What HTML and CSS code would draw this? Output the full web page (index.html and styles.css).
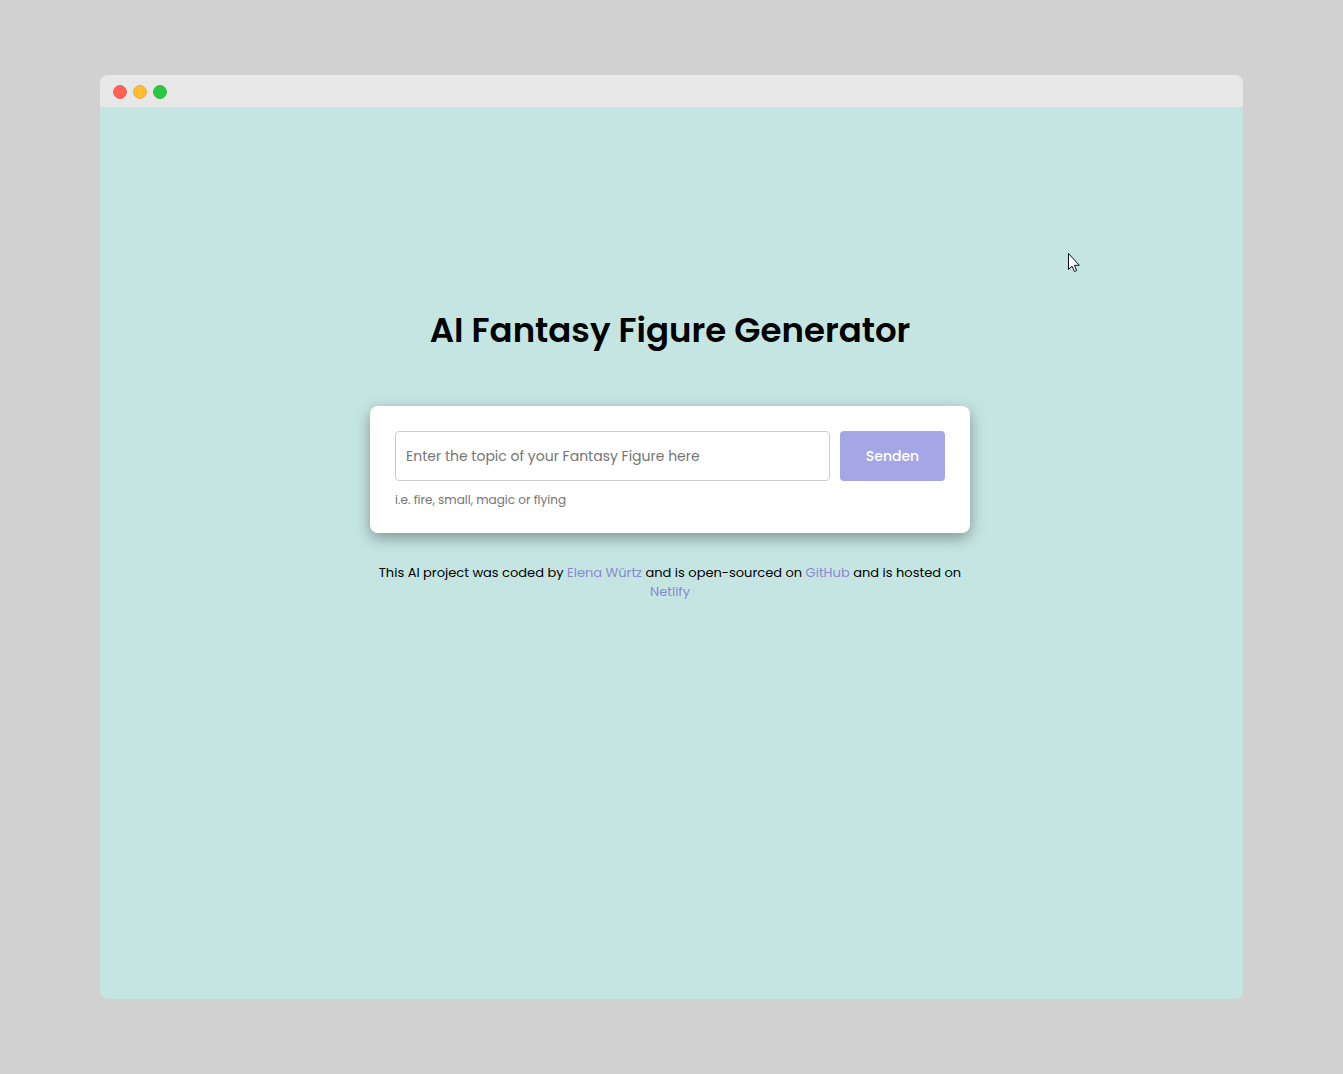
FILE: index.html
```html
<!DOCTYPE html>
<html lang="en">
<head>
<meta charset="utf-8">
<title>AI Fantasy Figure Generator</title>
<link rel="stylesheet" href="styles.css">
</head>
<body>
<div class="window">
  <div class="titlebar">
    <span class="dot dot-close"></span>
    <span class="dot dot-minimize"></span>
    <span class="dot dot-zoom"></span>
  </div>
  <main class="page">
    <h1 class="title">AI Fantasy Figure Generator</h1>
    <form class="card">
      <div class="row">
        <input class="topic" id="topic" type="text" aria-label="Topic" aria-describedby="hint" placeholder="Enter the topic of your Fantasy Figure here">
        <button class="send" type="submit">Senden</button>
      </div>
      <p class="hint" id="hint">i.e. fire, small, magic or flying</p>
    </form>
    <footer class="credits">This AI project was coded by <a href="#">Elena Würtz</a> and is open-sourced on <a href="#">GitHub</a> and is hosted on <a href="#">Netlify</a></footer>
    <svg class="cursor" width="14" height="21" viewBox="0 0 14 21" aria-hidden="true">
      <path d="M1.500 1.500V17.500L5 14.200L7.500 19.500L9.700 18.500L7.400 13.300H12.300Z" fill="#fff" stroke="#111"/>
    </svg>
  </main>
</div>
</body>
</html>
```
FILE: styles.css
```css
* { box-sizing: border-box; }

body {
  margin: 0;
  min-height: 100vh;
  padding: 75px 100px;
  display: flex;
  background: #d1d1d1;
  color: #000;
  font-family: Poppins, Inter, "Open Sans", sans-serif;
}

.window {
  flex: 1;
  display: flex;
  flex-direction: column;
  border-radius: 8px;
  overflow: hidden;
}

.titlebar {
  height: 32px;
  padding: 2px 13px 0;
  display: flex;
  align-items: center;
  gap: 6px;
  background: #e8e8e8;
}

.dot {
  width: 14px;
  height: 14px;
  border: 1px solid;
  border-radius: 50%;
}

.dot-close { background: #ff5f57; border-color: #f0655e; }
.dot-minimize { background: #febc2e; border-color: #e8ae40; }
.dot-zoom { background: #28c840; border-color: #35bb49; }

.page {
  flex: 1;
  position: relative;
  padding: 198px 27px 24px 24px;
  display: flex;
  flex-direction: column;
  align-items: center;
  background: #c5e5e3;
}

.title {
  margin: 0 0 51px;
  font-size: 34px;
  font-weight: 600;
  line-height: 50px;
  text-align: center;
}

.card {
  width: 100%;
  max-width: 600px;
  padding: 25px;
  border-radius: 8px;
  background: #fff;
  box-shadow: 0 5px 15px rgba(0, 0, 0, .35);
}

.row {
  display: flex;
  gap: 10px;
}

.topic {
  flex: 1;
  min-width: 0;
  height: 50px;
  padding: 0 10px;
  border: 1px solid #ccc;
  border-radius: 4px;
  font: inherit;
  font-size: 14px;
}

.topic::placeholder { color: #757575; }

.send {
  width: 105px;
  height: 50px;
  border: 0;
  border-radius: 4px;
  background: #a5a6e5;
  color: #fff;
  font: inherit;
  font-size: 14px;
  font-weight: 500;
}

.hint {
  margin: 10px 0 0;
  color: #757575;
  font-size: 12px;
  line-height: 17px;
}

.credits {
  max-width: 600px;
  margin-top: 30px;
  font-size: 13px;
  line-height: 19px;
  text-align: center;
}

.credits a {
  color: #8889cf;
  text-decoration: none;
}

.cursor {
  position: absolute;
  top: 145px;
  left: 967px;
}
```
